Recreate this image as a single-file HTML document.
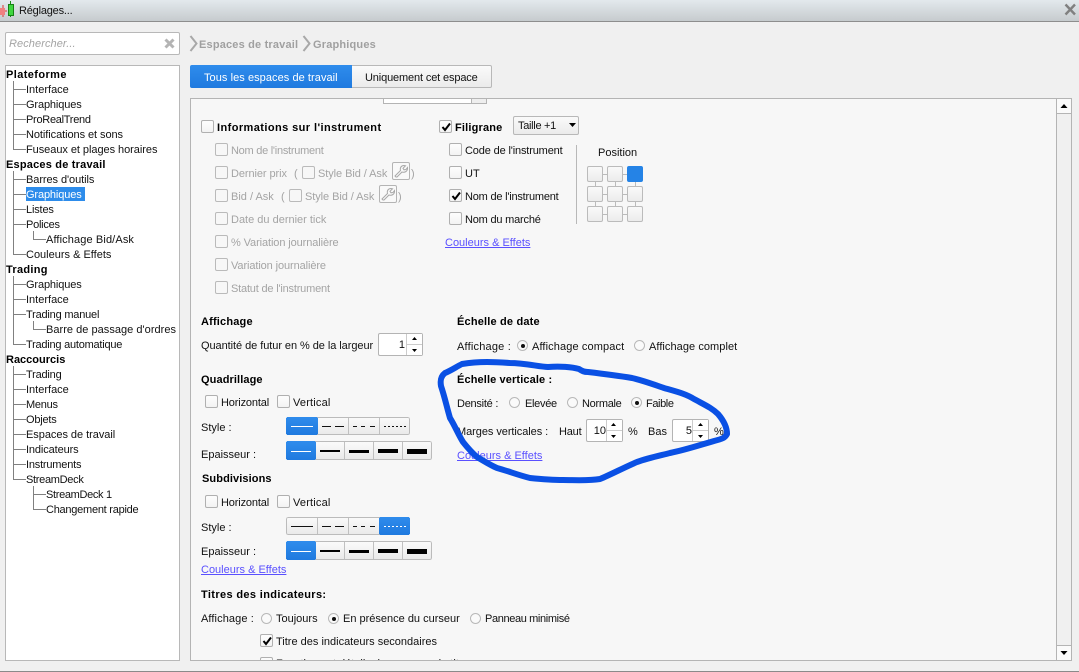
<!DOCTYPE html>
<html lang="fr"><head><meta charset="utf-8"><title>Réglages</title>
<style>
html,body{margin:0;padding:0}
body{width:1079px;height:672px;overflow:hidden;position:relative;background:#f0f0f0;font-family:"Liberation Sans",sans-serif;font-size:11px;color:#111}
.t{position:absolute;white-space:nowrap;line-height:14px;height:14px;margin-top:1px}
.b{font-weight:bold}
.g{color:#a4a4a4}
.l{color:#5a50ff;text-decoration:underline}
.a{position:absolute;box-sizing:border-box}
.c{position:absolute;box-sizing:border-box;width:13px;height:13px;border:1px solid #b0b0b0;border-radius:2px;background:linear-gradient(#fdfdfd,#f3f3f3)}
.c.d{border-color:#bababa;background:#f7f7f7}
.r{position:absolute;box-sizing:border-box;width:11px;height:11px;border:1px solid #b8b8b8;border-radius:50%;background:#fafafa}
.r.on::after{content:"";position:absolute;left:2.500px;top:2.500px;width:4px;height:4px;background:#111;border-radius:50%}
.p{position:absolute;box-sizing:border-box;width:16px;height:16px;border:1px solid #bbb;border-radius:2px;background:linear-gradient(#f9f9f9,#ececec)}
.sp{position:absolute;box-sizing:border-box;height:23px;border:1px solid #b4b4b4;border-radius:2px;background:#fff;text-align:right;line-height:22px}
.sp i{position:absolute;right:0;top:0;bottom:0;width:15px;border-left:1px solid #ccc;background:linear-gradient(#fff 48%,#ccc 48%,#ccc 52%,#fff 52%)}
.seg{position:absolute;box-sizing:border-box;border-radius:2px;background:linear-gradient(#fbfbfb,#e9e9e9)}
.seg svg{position:absolute;left:0;top:0}
</style></head><body>

<!-- title bar -->
<div class="a" style="left:0;top:0;width:1079px;height:22px;background:linear-gradient(#e3e9ed,#c6cbce);border-bottom:1px solid #8e8e8e"></div>
<svg class="a" style="left:0;top:0" width="16" height="18"><path d="M3 5V17M0 11H7" stroke="#d33" fill="none"/><rect x="0" y="8" width="5" height="7" fill="#f08080"/><path d="M10.500 1V17" stroke="#1a8a1a"/><rect x="8.500" y="4.500" width="5" height="11" fill="#3fd63f" stroke="#168016"/></svg>
<div class="t" style="left:19px;top:3px;letter-spacing:-.2px;color:#111">Réglages...</div>
<svg class="a" style="left:1064px;top:3px" width="13" height="13"><path d="M1.500 1.500L11 11.500M11 1.500L1.500 11.500" stroke="#808080" stroke-width="2.400"/></svg>

<!-- search -->
<div class="a" style="left:5px;top:32px;width:175px;height:23px;background:#fff;border:1px solid #b8b8b8;border-radius:2px"></div>
<div class="t" style="left:9px;top:36px;font-style:italic;color:#a4a4a4;letter-spacing:.08px">Rechercher...</div>
<svg class="a" style="left:164px;top:38px" width="11" height="11"><path d="M1.500 1.500L9.500 9.500M9.500 1.500L1.500 9.500" stroke="#b4b4b4" stroke-width="3"/></svg>

<!-- breadcrumb -->
<svg class="a" style="left:189px;top:35px" width="10" height="17"><path d="M1.500 1L7.500 8.500L1.500 16" stroke="#a8a8a8" stroke-width="2" fill="none"/></svg>
<div class="t b" style="left:199px;top:37px;color:#a0a0a0;letter-spacing:.18px">Espaces de travail</div>
<svg class="a" style="left:302px;top:35px" width="10" height="17"><path d="M1.500 1L7.500 8.500L1.500 16" stroke="#a8a8a8" stroke-width="2" fill="none"/></svg>
<div class="t b" style="left:313px;top:37px;color:#a0a0a0;letter-spacing:.18px">Graphiques</div>

<!-- tree panel -->
<div class="a" style="left:5px;top:65px;width:175px;height:596px;background:#fff;border:1px solid #b8b8b8"></div>
<svg class="a" style="left:0;top:0" width="190" height="530" shape-rendering="crispEdges" stroke="#808080" fill="none">
<path d="M13.500 81V149.500H26M13.500 89.500H26M13.500 104.500H26M13.500 119.500H26M13.500 134.500H26"/>
<path d="M13.500 171V254.500H26M13.500 179.500H26M13.500 194.500H26M13.500 209.500H26M13.500 224.500H26"/>
<path d="M33.500 231V239.500H46"/>
<path d="M13.500 276V344.500H26M13.500 284.500H26M13.500 299.500H26M13.500 314.500H26"/>
<path d="M33.500 321V329.500H46"/>
<path d="M13.500 366V479.500H26M13.500 374.500H26M13.500 389.500H26M13.500 404.500H26M13.500 419.500H26M13.500 434.500H26M13.500 449.500H26M13.500 464.500H26"/>
<path d="M33.500 486V509.500H46M33.500 494.500H46"/>
</svg>
<div class="t b" style="left:6px;top:67px;letter-spacing:.4px;color:#000">Plateforme</div>
<div class="t" style="left:26px;top:82px">Interface</div>
<div class="t" style="left:26px;top:97px;letter-spacing:-.13px">Graphiques</div>
<div class="t" style="left:26px;top:112px;letter-spacing:-.28px">ProRealTrend</div>
<div class="t" style="left:26px;top:127px;letter-spacing:-.07px">Notifications et sons</div>
<div class="t" style="left:26px;top:142px;letter-spacing:-.05px">Fuseaux et plages horaires</div>
<div class="t b" style="left:6px;top:157px;letter-spacing:.2px;color:#000">Espaces de travail</div>
<div class="t" style="left:26px;top:172px;letter-spacing:-.07px">Barres d'outils</div>
<div class="a" style="left:26px;top:187px;width:59px;height:14px;background:#2d8ceb"></div>
<div class="t" style="left:26px;top:187px;color:#fff;letter-spacing:-.13px">Graphiques</div>
<div class="t" style="left:26px;top:202px;letter-spacing:-.17px">Listes</div>
<div class="t" style="left:26px;top:217px;letter-spacing:-.25px">Polices</div>
<div class="t" style="left:46px;top:232px;letter-spacing:.12px">Affichage Bid/Ask</div>
<div class="t" style="left:26px;top:247px">Couleurs &amp; Effets</div>
<div class="t b" style="left:6px;top:262px;letter-spacing:.3px;color:#000">Trading</div>
<div class="t" style="left:26px;top:277px;letter-spacing:-.13px">Graphiques</div>
<div class="t" style="left:26px;top:292px">Interface</div>
<div class="t" style="left:26px;top:307px;letter-spacing:-.2px">Trading manuel</div>
<div class="t" style="left:46px;top:322px;letter-spacing:.03px">Barre de passage d'ordres</div>
<div class="t" style="left:26px;top:337px;letter-spacing:-.23px">Trading automatique</div>
<div class="t b" style="left:6px;top:352px;color:#000">Raccourcis</div>
<div class="t" style="left:26px;top:367px;letter-spacing:-.2px">Trading</div>
<div class="t" style="left:26px;top:382px">Interface</div>
<div class="t" style="left:26px;top:397px;letter-spacing:-.25px">Menus</div>
<div class="t" style="left:26px;top:412px;letter-spacing:-.2px">Objets</div>
<div class="t" style="left:26px;top:427px;letter-spacing:-.04px">Espaces de travail</div>
<div class="t" style="left:26px;top:442px;letter-spacing:-.12px">Indicateurs</div>
<div class="t" style="left:26px;top:457px;letter-spacing:-.2px">Instruments</div>
<div class="t" style="left:26px;top:472px;letter-spacing:-.3px">StreamDeck</div>
<div class="t" style="left:46px;top:487px;letter-spacing:-.33px">StreamDeck 1</div>
<div class="t" style="left:46px;top:502px;letter-spacing:-.25px">Changement rapide</div>

<!-- tabs -->
<div class="a" style="left:190px;top:65px;width:162px;height:23px;background:linear-gradient(#2f8cec,#1f7adf);border-radius:2px 0 0 2px"></div>
<div class="t" style="left:204px;top:70px;color:#fff;letter-spacing:.06px">Tous les espaces de travail</div>
<div class="a" style="left:352px;top:65px;width:140px;height:23px;background:linear-gradient(#fafafa,#ebebeb);border:1px solid #b8b8b8;border-left:0;border-radius:0 2px 2px 0"></div>
<div class="t" style="left:365px;top:70px;color:#111;letter-spacing:-.14px">Uniquement cet espace</div>

<!-- main panel -->
<div class="a" style="left:190px;top:98px;width:882px;height:563px;background:#f7f7f7;border:1px solid #b4b4b4"></div>
<div class="a" style="left:1056px;top:98px;width:16px;height:563px;background:#f0f0f0;border:1px solid #b4b4b4"></div>
<div class="a" style="left:1057px;top:99px;width:14px;height:15px;background:#fafafa;border-bottom:1px solid #b4b4b4"></div>
<div class="a" style="left:1057px;top:645px;width:14px;height:15px;background:#fafafa;border-top:1px solid #b4b4b4"></div>
<svg class="a" style="left:1060px;top:104px" width="8" height="5"><path d="M4 0L7.500 4H.5Z" fill="#000"/></svg>
<svg class="a" style="left:1060px;top:651px" width="8" height="5"><path d="M.5 0H7.500L4 4Z" fill="#000"/></svg>
<div class="a" style="left:383px;top:99px;width:104px;height:5px;background:#fff;border:1px solid #b4b4b4;border-top:0"></div>
<div class="a" style="left:471px;top:99px;width:16px;height:5px;background:#eee;border:1px solid #b4b4b4;border-top:0"></div>

<!-- informations -->
<div class="c" style="left:201px;top:120px"></div>
<div class="t b" style="left:217px;top:120px;letter-spacing:.42px;color:#000">Informations sur l'instrument</div>
<div class="c d" style="left:215px;top:143px"></div><div class="t g" style="left:231px;top:143px;letter-spacing:-.26px">Nom de l'instrument</div>
<div class="c d" style="left:215px;top:166px"></div><div class="t g" style="left:231px;top:166px;letter-spacing:-.08px">Dernier prix</div>
<div class="t g" style="left:294px;top:166px">(</div>
<div class="c d" style="left:302px;top:166px"></div><div class="t g" style="left:318px;top:166px;letter-spacing:-.07px">Style Bid / Ask</div>
<div class="a" style="left:392px;top:162px;width:18px;height:18px;border:1px solid #b4b4b4;border-radius:2px;background:#f9f9f9"></div>
<svg class="a" style="left:393px;top:163px" width="16" height="16"><path d="M3 14L2 13L7.500 7.500C6.800 5 8 2.500 11 2.500L12.500 2.800L10 5.300L11 6.800L13 6.500L14.500 4.500C15 8 12 10 9 9L4 14Z" fill="none" stroke="#a8a8a8"/></svg>
<div class="t g" style="left:411px;top:166px">)</div>
<div class="c d" style="left:215px;top:189px"></div><div class="t g" style="left:231px;top:189px">Bid / Ask</div>
<div class="t g" style="left:281px;top:189px">(</div>
<div class="c d" style="left:289px;top:189px"></div><div class="t g" style="left:305px;top:189px;letter-spacing:-.07px">Style Bid / Ask</div>
<div class="a" style="left:379px;top:185px;width:18px;height:18px;border:1px solid #b4b4b4;border-radius:2px;background:#f9f9f9"></div>
<svg class="a" style="left:380px;top:186px" width="16" height="16"><path d="M3 14L2 13L7.500 7.500C6.800 5 8 2.500 11 2.500L12.500 2.800L10 5.300L11 6.800L13 6.500L14.500 4.500C15 8 12 10 9 9L4 14Z" fill="none" stroke="#a8a8a8"/></svg>
<div class="t g" style="left:398px;top:189px">)</div>
<div class="c d" style="left:215px;top:212px"></div><div class="t g" style="left:231px;top:212px">Date du dernier tick</div>
<div class="c d" style="left:215px;top:235px"></div><div class="t g" style="left:231px;top:235px;letter-spacing:-.1px">% Variation journalière</div>
<div class="c d" style="left:215px;top:258px"></div><div class="t g" style="left:231px;top:258px;letter-spacing:-.1px">Variation journalière</div>
<div class="c d" style="left:215px;top:281px"></div><div class="t g" style="left:231px;top:281px;letter-spacing:-.19px">Statut de l'instrument</div>

<!-- filigrane -->
<div class="c" style="left:439px;top:120px"></div>
<svg class="a" style="left:440px;top:121px" width="12" height="12"><path d="M2.500 6L5 9L10 2.500" fill="none" stroke="#000" stroke-width="2"/></svg>
<div class="t b" style="left:455px;top:120px;letter-spacing:.18px;color:#000">Filigrane</div>
<div class="a" style="left:513px;top:116px;width:66px;height:19px;border:1px solid #b8b8b8;border-radius:2px;background:linear-gradient(#fafafa,#ebebeb)"></div>
<div class="t" style="left:518px;top:118px;letter-spacing:-.3px">Taille +1</div>
<svg class="a" style="left:569px;top:123px" width="8" height="5"><path d="M0 0H7L3.500 4Z" fill="#000"/></svg>
<div class="c" style="left:449px;top:143px"></div><div class="t" style="left:465px;top:143px;letter-spacing:-.15px">Code de l'instrument</div>
<div class="c" style="left:449px;top:166px"></div><div class="t" style="left:465px;top:166px">UT</div>
<div class="c" style="left:449px;top:189px"></div><div class="t" style="left:465px;top:189px;letter-spacing:-.21px">Nom de l'instrument</div>
<svg class="a" style="left:450px;top:190px" width="12" height="12"><path d="M2.500 6L5 9L10 2.500" fill="none" stroke="#000" stroke-width="2"/></svg>
<div class="c" style="left:449px;top:212px"></div><div class="t" style="left:465px;top:212px;letter-spacing:-.2px">Nom du marché</div>
<div class="t l" style="left:445px;top:235px">Couleurs &amp; Effets</div>
<div class="a" style="left:576px;top:145px;width:1px;height:79px;background:#b8b8b8"></div>
<div class="t" style="left:598px;top:145px">Position</div>
<svg class="a" style="left:585px;top:164px" width="60" height="60" shape-rendering="crispEdges" stroke="#bbb" fill="none"><path d="M10 10.500H50M10 30.500H50M10 50.500H50M10.500 10V50M30.500 10V50M50.500 10V50"/></svg>
<div class="p" style="left:587px;top:166px"></div><div class="p" style="left:607px;top:166px"></div><div class="p" style="left:627px;top:166px;background:#2583e6;border-color:#2583e6"></div>
<div class="p" style="left:587px;top:186px"></div><div class="p" style="left:607px;top:186px"></div><div class="p" style="left:627px;top:186px"></div>
<div class="p" style="left:587px;top:206px"></div><div class="p" style="left:607px;top:206px"></div><div class="p" style="left:627px;top:206px"></div>

<!-- affichage -->
<div class="t b" style="left:201px;top:314px;letter-spacing:.18px;color:#000">Affichage</div>
<div class="t" style="left:201px;top:338px;letter-spacing:-.06px">Quantité de futur en % de la largeur</div>
<div class="sp" style="left:378px;top:333px;width:45px;padding-right:17px">1<i></i></div>
<svg class="a" style="left:410px;top:337px" width="9" height="17"><path d="M4.500 0L7 3H2ZM2 12H7L4.500 15Z" fill="#000"/></svg>

<div class="t b" style="left:201px;top:372px;letter-spacing:.1px;color:#000">Quadrillage</div>
<div class="c" style="left:205px;top:395px"></div><div class="t" style="left:221px;top:395px;letter-spacing:-.15px">Horizontal</div>
<div class="c" style="left:277px;top:395px"></div><div class="t" style="left:293px;top:395px;letter-spacing:.18px">Vertical</div>
<div class="t" style="left:201px;top:420px">Style :</div>

<!-- segmented: style (quadrillage) -->
<div class="seg" style="left:286px;top:417px;width:124px;height:18px"><svg width="124" height="18" shape-rendering="crispEdges">
<defs><linearGradient id="bl" x1="0" y1="0" x2="0" y2="1"><stop offset="0" stop-color="#2f8cec"/><stop offset="1" stop-color="#1f7adf"/></linearGradient></defs>
<rect x=".5" y=".5" width="123" height="17" rx="2" fill="none" stroke="#bbb"/>
<rect x="0" y="0" width="32" height="18" rx="2" fill="url(#bl)"/>
<path d="M62.500 1V17M93.500 1V17" stroke="#c0c0c0"/>
<rect x="5" y="9" width="22" height="1" fill="#fff"/>
<path d="M36 9.500H45M49 9.500H58" stroke="#111"/>
<path d="M67 9.500H71M75 9.500H79M84 9.500H89" stroke="#111"/>
<path d="M98 9.500H121" stroke="#111" stroke-dasharray="2 2"/>
</svg></div>
<div class="t" style="left:201px;top:447px">Epaisseur :</div>
<!-- segmented: epaisseur (quadrillage) -->
<div class="seg" style="left:286px;top:441px;width:146px;height:19px"><svg width="146" height="19" shape-rendering="crispEdges">
<rect x=".5" y=".5" width="145" height="18" rx="2" fill="none" stroke="#bbb"/>
<rect x="0" y="0" width="30" height="19" rx="2" fill="url(#bl)"/>
<path d="M58.500 1V18M87.500 1V18M116.500 1V18" stroke="#c0c0c0"/>
<rect x="5" y="10" width="20" height="1" fill="#fff"/>
<rect x="34" y="9" width="20" height="2" fill="#000"/>
<rect x="63" y="9" width="20" height="3" fill="#000"/>
<rect x="92" y="8" width="20" height="4" fill="#000"/>
<rect x="121" y="8" width="20" height="5" fill="#000"/>
</svg></div>

<div class="t b" style="left:202px;top:471px;letter-spacing:.1px;color:#000">Subdivisions</div>
<div class="c" style="left:205px;top:495px"></div><div class="t" style="left:221px;top:495px;letter-spacing:-.15px">Horizontal</div>
<div class="c" style="left:277px;top:495px"></div><div class="t" style="left:293px;top:495px;letter-spacing:.18px">Vertical</div>
<div class="t" style="left:201px;top:520px">Style :</div>
<!-- segmented: style (subdivisions) -->
<div class="seg" style="left:286px;top:517px;width:124px;height:18px"><svg width="124" height="18" shape-rendering="crispEdges">
<rect x=".5" y=".5" width="123" height="17" rx="2" fill="none" stroke="#bbb"/>
<rect x="93" y="0" width="31" height="18" rx="2" fill="url(#bl)"/>
<path d="M31.500 1V17M62.500 1V17" stroke="#c0c0c0"/>
<rect x="5" y="9" width="22" height="1" fill="#111"/>
<path d="M36 9.500H45M49 9.500H58" stroke="#111"/>
<path d="M67 9.500H71M75 9.500H79M84 9.500H89" stroke="#111"/>
<path d="M98 9.500H121" stroke="#fff" stroke-dasharray="2 2"/>
</svg></div>
<div class="t" style="left:201px;top:544px">Epaisseur :</div>
<!-- segmented: epaisseur (subdivisions) -->
<div class="seg" style="left:286px;top:541px;width:146px;height:19px"><svg width="146" height="19" shape-rendering="crispEdges">
<rect x=".5" y=".5" width="145" height="18" rx="2" fill="none" stroke="#bbb"/>
<rect x="0" y="0" width="30" height="19" rx="2" fill="url(#bl)"/>
<path d="M58.500 1V18M87.500 1V18M116.500 1V18" stroke="#c0c0c0"/>
<rect x="5" y="10" width="20" height="1" fill="#fff"/>
<rect x="34" y="9" width="20" height="2" fill="#000"/>
<rect x="63" y="9" width="20" height="3" fill="#000"/>
<rect x="92" y="8" width="20" height="4" fill="#000"/>
<rect x="121" y="8" width="20" height="5" fill="#000"/>
</svg></div>
<div class="t l" style="left:201px;top:562px">Couleurs &amp; Effets</div>

<div class="t b" style="left:201px;top:587px;letter-spacing:.36px;color:#000">Titres des indicateurs:</div>
<div class="t" style="left:201px;top:611px;letter-spacing:.1px">Affichage :</div>
<div class="r" style="left:261px;top:613px"></div><div class="t" style="left:276px;top:611px">Toujours</div>
<div class="r on" style="left:328px;top:613px"></div><div class="t" style="left:343px;top:611px">En présence du curseur</div>
<div class="r" style="left:470px;top:613px"></div><div class="t" style="left:485px;top:611px;letter-spacing:-.37px">Panneau minimisé</div>
<div class="c" style="left:260px;top:634px"></div>
<svg class="a" style="left:261px;top:635px" width="12" height="12"><path d="M2.500 6L5 9L10 2.500" fill="none" stroke="#000" stroke-width="2"/></svg>
<div class="t" style="left:276px;top:634px">Titre des indicateurs secondaires</div>
<div class="a" style="left:191px;top:656px;width:865px;height:4px;overflow:hidden">
  <div class="c" style="left:69px;top:1px"></div>
  <svg class="a" style="left:70px;top:2px" width="12" height="12"><path d="M2.500 6L5 9L10 2.500" fill="none" stroke="#000" stroke-width="2"/></svg>
  <div class="t" style="left:85px;top:0">Fonctions et détails du panneau de titres</div>
</div>

<!-- right column -->
<div class="t b" style="left:457px;top:314px;letter-spacing:.18px;color:#000">Échelle de date</div>
<div class="t" style="left:457px;top:339px;letter-spacing:.2px">Affichage :</div>
<div class="r on" style="left:517px;top:340px"></div><div class="t" style="left:532px;top:339px;letter-spacing:.12px">Affichage compact</div>
<div class="r" style="left:634px;top:340px"></div><div class="t" style="left:649px;top:339px;letter-spacing:.06px">Affichage complet</div>
<div class="t b" style="left:457px;top:372px;letter-spacing:.12px;color:#000">Échelle verticale :</div>
<div class="t" style="left:457px;top:396px;letter-spacing:-.25px">Densité :</div>
<div class="r" style="left:509px;top:397px"></div><div class="t" style="left:525px;top:396px;letter-spacing:-.3px">Elevée</div>
<div class="r" style="left:567px;top:397px"></div><div class="t" style="left:582px;top:396px;letter-spacing:-.3px">Normale</div>
<div class="r on" style="left:631px;top:397px"></div><div class="t" style="left:646px;top:396px;letter-spacing:-.4px">Faible</div>
<div class="t" style="left:457px;top:424px;letter-spacing:-.06px">Marges verticales :</div>
<div class="t" style="left:559px;top:424px;letter-spacing:-.2px">Haut</div>
<div class="sp" style="left:586px;top:419px;width:37px;padding-right:16px">10<i></i></div>
<svg class="a" style="left:609px;top:423px" width="9" height="17"><path d="M4.500 0L7 3H2ZM2 12H7L4.500 15Z" fill="#000"/></svg>
<div class="t" style="left:628px;top:424px">%</div>
<div class="t" style="left:648px;top:424px">Bas</div>
<div class="sp" style="left:672px;top:419px;width:37px;padding-right:16px">5<i></i></div>
<svg class="a" style="left:696px;top:423px" width="9" height="17"><path d="M4.500 0L7 3H2ZM2 12H7L4.500 15Z" fill="#000"/></svg>
<div class="t" style="left:714px;top:424px">%</div>
<div class="t l" style="left:457px;top:448px">Couleurs &amp; Effets</div>

<!-- hand-drawn circle -->
<svg class="a" style="left:0;top:0" width="1079" height="672"><path d="M462 364C480 361 495 362 510 363C525 363 540 367 548 367C560 366 572 367 579 369C582 371 584 372 588 372C605 374 620 376 632 378C645 381 655 385 664 388C678 392 686 394 694 399C705 405 712 408 718 414C724 421 727 428 727 434C725 438 722 439 714 441C700 445 685 450 670 453C658 456 648 458 637 462C625 467 612 474 600 479C588 481 575 480 563 480C550 480 540 479 530 478C518 475 508 471 497 468C490 465 484 461 477 457C471 452 467 447 463 442C458 434 455 426 450 418C447 408 445 398 441 386C440 380 441 376 445 373C452 370 456 367 462 364Z" fill="none" stroke="#0a50e4" stroke-width="6" stroke-linejoin="round"/></svg>

<!-- bottom edge -->
<div class="a" style="left:0;top:671px;width:1079px;height:1px;background:#8a8a8a"></div>
</body></html>
